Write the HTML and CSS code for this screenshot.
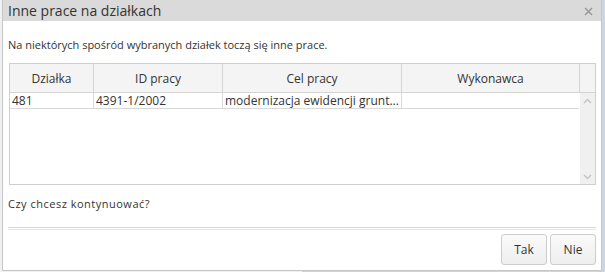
FILE: index.html
```html
<!DOCTYPE html>
<html lang="pl">
<head>
    <meta charset="UTF-8">
    <meta name="viewport" content="width=device-width, initial-scale=1.0">
    <title>Inne prace na działkach</title>
    <link rel="stylesheet" href="styles.css">
</head>
<body>
    <div class="dialog">
        <div class="dialog-title">
            <span>Inne prace na działkach</span>
            <svg class="close" width="9" height="9" viewBox="0 0 9 9">
                <path d="M1 1 L8 8 M8 1 L1 8" stroke="#999" stroke-width="1.5" fill="none"/>
            </svg>
        </div>

        <div class="dialog-content">
            <p class="message">Na niektórych spośród wybranych działek toczą się inne prace.</p>

            <div class="grid">
                <div class="grid-head">
                    <div class="hcell">Działka</div>
                    <div class="hcell">ID pracy</div>
                    <div class="hcell">Cel pracy</div>
                    <div class="hcell">Wykonawca</div>
                    <div class="hcell last"></div>
                </div>
                <div class="grid-body">
                    <div class="rows">
                        <div class="row">
                            <div class="cell">481</div>
                            <div class="cell">4391-1/2002</div>
                            <div class="cell">modernizacja ewidencji grunt...</div>
                            <div class="cell"></div>
                        </div>
                    </div>
                    <div class="scrollbar">
                        <svg width="9" height="6" viewBox="0 0 9 6"><path d="M1 5 L4.5 1.5 L8 5" stroke="#c4c4c4" stroke-width="1.5" fill="none"/></svg>
                        <svg width="9" height="6" viewBox="0 0 9 6"><path d="M1 1 L4.5 4.5 L8 1" stroke="#c4c4c4" stroke-width="1.5" fill="none"/></svg>
                    </div>
                </div>
            </div>

            <p class="question">Czy chcesz kontynuować?</p>

            <div class="separator"></div>

            <div class="buttons">
                <button class="btn">Tak</button>
                <button class="btn">Nie</button>
            </div>
        </div>
    </div>
</body>
</html>
```

FILE: styles.css
```css
body {
    margin: 0;
    background: linear-gradient(to right, #eef1f4 0, #eef1f4 50%, #c9d7e4 50%, #c9d7e4 100%);
    font-family: "Open Sans", Arial, sans-serif;
    color: #333;
}
.dialog {
    box-sizing: border-box;
    margin: 0 3px 0 2px;
    height: 271px;
    background: #fff;
    border: 1px solid #c6c6c6;
    border-top: none;
}
.dialog-title {
    height: 21px;
    background: #dadada;
    display: flex;
    align-items: center;
    justify-content: space-between;
    padding: 0 8px 0 5px;
    font-size: 14px;
    color: #333;
}
.close {
    margin-top: 2px;
}
.dialog-content {
    padding: 0 5px 0 6px;
}
.message,
.question {
    margin: 0;
    font-size: 11px;
    line-height: 16px;
    margin-left: -1px;
}
.message {
    padding-top: 16px;
    margin-bottom: 10px;
}
.grid {
    border: 1px solid #cfcfcf;
    height: 122px;
    box-sizing: border-box;
    display: flex;
    flex-direction: column;
    font-size: 12px;
}
.grid-head {
    display: grid;
    grid-template-columns: 84px 129px 179px 178px 16px;
    height: 29px;
    background: #f4f4f4;
    border-bottom: 1px solid #d4d4d4;
    box-sizing: border-box;
}
.hcell {
    display: flex;
    align-items: center;
    justify-content: center;
    border-right: 1px solid #d4d4d4;
}
.hcell.last {
    border-right: none;
}
.grid-body {
    flex: 1;
    display: flex;
}
.rows {
    flex: 1;
}
.row {
    display: grid;
    grid-template-columns: 84px 129px 179px 177px;
    height: 16px;
    border-bottom: 1px solid #d8d8d8;
    box-sizing: border-box;
    margin-right: 1px;
}
.cell {
    border-right: 1px solid #d8d8d8;
    padding-left: 2px;
    line-height: 15px;
    white-space: nowrap;
}
.cell:last-child {
    border-right: none;
}
.scrollbar {
    width: 16px;
    background: #f0f0f0;
    display: flex;
    flex-direction: column;
    align-items: center;
    justify-content: space-between;
    padding: 5px 0 4px;
    box-sizing: border-box;
}
.question {
    margin-top: 11px;
    letter-spacing: 0.5px;
}
.separator {
    margin: 15px 0 0 -1px;
    height: 1px;
    border-top: 1px solid #d6d6d6;
    border-bottom: 1px solid #e6e6e6;
}
.buttons {
    display: flex;
    justify-content: flex-end;
    gap: 3px;
    margin-top: 4px;
}
.btn {
    width: 46px;
    height: 31px;
    border: 1px solid #cdcdcd;
    border-radius: 3px;
    background: linear-gradient(#fafafa, #eeeeee);
    font-family: "Open Sans", Arial, sans-serif;
    font-size: 12px;
    color: #333;
    padding: 0;
}
```
